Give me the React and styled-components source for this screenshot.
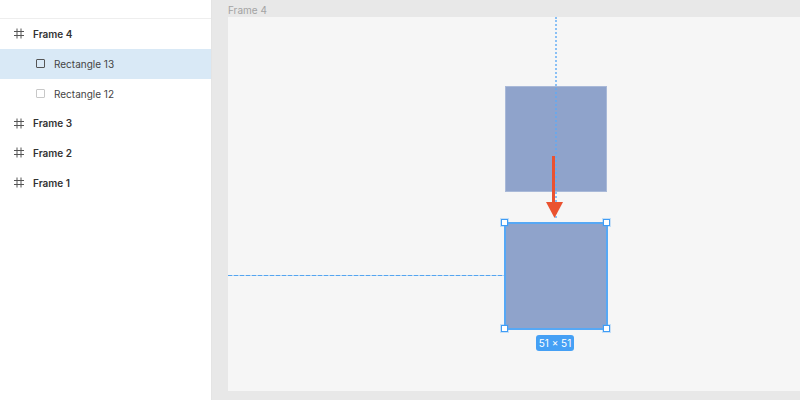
import React from 'react'
import styled, { createGlobalStyle } from 'styled-components'

const GlobalStyle = createGlobalStyle`
  html, body {
    margin: 0;
    padding: 0;
    background: #e8e8e8;
  }
`

const Page = styled.div`
  width: 800px;
  height: 400px;
  display: flex;
  overflow: hidden;
  font-family: Inter, "Liberation Sans", sans-serif;
`

const Sidebar = styled.div`
  width: 211px;
  background: #ffffff;
  border-right: 1px solid #e4e4e4;
  padding-top: 18px;
  display: flex;
  flex-direction: column;
`

const Divider = styled.div`
  height: 1px;
  background: #eeeeee;
`

const Row = styled.div`
  height: ${(p) => (p.$child ? '30px' : '29.6px')};
  display: flex;
  align-items: center;
  gap: 9px;
  padding-left: ${(p) => (p.$child ? '36px' : '14px')};
  background: ${(p) => (p.$selected ? '#d9e9f6' : 'transparent')};
  font-size: 10px;
  font-weight: ${(p) => (p.$child ? 400 : 600)};
  color: ${(p) => (p.$child ? '#444444' : '#333333')};
`

const RectIcon = styled.span`
  width: 7px;
  height: 7px;
  border: 1px solid ${(p) => (p.$dark ? '#555555' : '#c8c8c8')};
  border-radius: 1px;
  background: ${(p) => (p.$dark ? 'transparent' : '#ffffff')};
`

const Canvas = styled.div`
  flex: 1;
  padding: 0 0 9px 16px;
  display: flex;
  flex-direction: column;
`

const FrameLabel = styled.div`
  height: 17px;
  padding-top: 4px;
  box-sizing: border-box;
  line-height: 12px;
  font-size: 10px;
  color: #a3a3a3;
`

const Frame = styled.div`
  flex: 1;
  background: #f6f6f6;
  position: relative;
`

const Shape = styled.div`
  position: absolute;
  left: 277px;
  top: 69px;
  width: 102px;
  height: 106px;
  box-sizing: border-box;
  background: #8fa3cb;
  border: 1px solid #a9b9d8;
`

const SelectedShape = styled.div`
  position: absolute;
  left: 276px;
  top: 205px;
  width: 104px;
  height: 108px;
  box-sizing: border-box;
  background: #8fa3cb;
  border: 2px solid #56a8f5;
`

const Handle = styled.div`
  position: absolute;
  ${(p) => (p.$bottom ? 'bottom: -4px' : 'top: -5px')};
  ${(p) => (p.$right ? 'right: -4px' : 'left: -5px')};
  width: 5px;
  height: 5px;
  background: #ffffff;
  border: 1px solid #3f9cf5;
  box-shadow: 0 0 0 1px rgba(86, 168, 245, 0.3);
`

const VGuide = styled.div`
  position: absolute;
  left: 327px;
  top: 0;
  height: 201px;
  border-left: 2px dotted rgba(92, 170, 245, 0.7);
`

const HGuide = styled.div`
  position: absolute;
  left: 0;
  top: 258px;
  width: 276px;
  height: 1px;
  background: repeating-linear-gradient(to right, #55a5f0 0 4px, #b5d6f5 4px 6px);
`

const SizeBadge = styled.div`
  position: absolute;
  left: 308px;
  top: 318px;
  width: 38px;
  height: 16px;
  border-radius: 3px;
  background: #45a0f5;
  color: #ffffff;
  font-size: 10px;
  font-weight: 400;
  display: flex;
  align-items: center;
  justify-content: center;
`

const Arrow = styled.svg`
  position: absolute;
  left: 316px;
  top: 137px;
`

const FrameIcon = () => (
  <svg width="10" height="11" viewBox="0 0 10 11" fill="none" stroke="#555555" strokeWidth="1">
    <path d="M3 0.5V10.5M7 0.5V10.5M0 3.5H10M0 7.5H10" />
  </svg>
)

const layers = [
  { name: 'Frame 4' },
  { name: 'Rectangle 13', child: true, selected: true },
  { name: 'Rectangle 12', child: true },
  { name: 'Frame 3' },
  { name: 'Frame 2' },
  { name: 'Frame 1' },
]

const App = () => {
  return (
    <Page>
      <GlobalStyle />
      <Sidebar>
        <Divider />
        {layers.map((layer) => (
          <Row key={layer.name} $child={layer.child} $selected={layer.selected}>
            {layer.child ? <RectIcon $dark={layer.selected} /> : <FrameIcon />}
            {layer.name}
          </Row>
        ))}
      </Sidebar>
      <Canvas>
        <FrameLabel>Frame 4</FrameLabel>
        <Frame>
          <Shape />
          <VGuide />
          <HGuide />
          <SelectedShape>
            <Handle />
            <Handle $right />
            <Handle $bottom />
            <Handle $bottom $right />
          </SelectedShape>
          <Arrow width="20" height="66" viewBox="0 0 20 66">
            <rect x="8" y="2" width="3" height="48" fill="#ea5230" />
            <polygon points="2,48 19,48 10.5,64" fill="#ea5230" />
          </Arrow>
          <SizeBadge>51 × 51</SizeBadge>
        </Frame>
      </Canvas>
    </Page>
  )
}

export default App
